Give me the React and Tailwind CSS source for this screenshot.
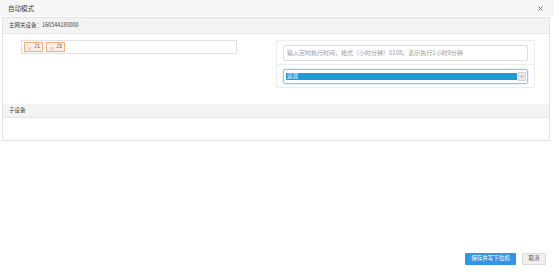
import React from 'react';

const font = { fontFamily: '"Noto Sans CJK SC", "Liberation Sans", sans-serif' };

const Tag = ({ label }) => (
  <span className="flex items-center h-[10px] px-[2px] gap-[2px] border border-[#f4ae84] bg-[#fdece1] text-[5.5px] text-[#666] leading-none">
    <span className="text-[5px] text-[#999]">×</span>
    <span>{label}</span>
  </span>
);

export default function App() {
  return (
    <div className="w-[554px] h-[272px] bg-white flex flex-col text-[#333]" style={font}>
      {/* title bar */}
      <div className="h-[16px] bg-[#f6f6f6] flex items-center justify-between pl-[8px] pr-[10px]">
        <span className="text-[6.5px] text-[#444] leading-none">自动模式</span>
        <svg width="5" height="5" viewBox="0 0 5 5" className="mr-[1px]">
          <path d="M0.5 0.5 L4.5 4.5 M4.5 0.5 L0.5 4.5" stroke="#666" strokeWidth="0.9" />
        </svg>
      </div>

      {/* panel */}
      <div className="mt-[1px] ml-[2px] w-[548px] border border-[#e3e3e3] flex flex-col">
        <div className="h-[16px] bg-[#f3f3f3] border-b border-[#e6e6e6] flex items-center pl-[6px]">
          <span className="text-[5.5px] text-[#444] leading-none">主网关设备：160544180000</span>
        </div>

        <div className="flex pt-[6px] pb-[16px]">
          <div className="w-[273px] pl-[18px]">
            <div className="w-[216px] h-[14px] border border-[#e2e2e2] flex items-center gap-[3px] pl-[2px]">
              <Tag label="J1" />
              <Tag label="J2" />
            </div>
          </div>
          <div className="w-[259px] h-[48px] border border-[#ececec] rounded-[2px] flex flex-col">
            <div className="px-[6px] pt-[4px] pb-[3px] border-b border-[#ededed]">
              <div className="h-[16px] border border-[#dedede] rounded-[2px] flex items-center pl-[3px]">
                <span className="text-[6px] text-[#999] leading-none whitespace-nowrap">
                  输入定时执行时间，格式（小时分钟）0108。表示执行1小时8分钟
                </span>
              </div>
            </div>
            <div className="px-[6px] pt-[4px]">
              <div className="h-[15px] border border-[#8cc7f2] rounded-[2px] shadow-[0_0_2px_#9fd0f5] flex items-center pl-[2px] pr-[1px]">
                <div className="flex-1 h-[7px] bg-[#1f9ad8] flex items-center pl-[1px]">
                  <span className="text-[5.5px] text-[#e8f4fb] leading-none">遥观</span>
                </div>
                <div className="w-[8px] h-[9px] ml-[1px] bg-[#e9e9e9] border border-[#d6d6d6] flex items-center justify-center">
                  <svg width="4" height="3" viewBox="0 0 4 3">
                    <path d="M0.5 0.8 L2 2.2 L3.5 0.8" stroke="#777" strokeWidth="0.7" fill="none" />
                  </svg>
                </div>
              </div>
            </div>
          </div>
        </div>

        <div className="h-[14px] bg-[#f3f3f3] border-b border-[#e6e6e6] flex items-center pl-[6px]">
          <span className="text-[5.5px] text-[#444] leading-none">子设备</span>
        </div>
        <div className="h-[22px]" />
      </div>

      <div className="flex-1" />

      {/* footer */}
      <div className="flex justify-end items-center gap-[6px] pr-[8px] pb-[7px]">
        <button className="h-[12px] w-[51px] bg-[#3495e6] text-white text-[5.5px] leading-none rounded-[1px]">
          保存并写下位机
        </button>
        <button className="h-[12px] w-[24px] bg-[#efefef] border border-[#dcdcdc] text-[#555] text-[5.5px] leading-none rounded-[1px]">
          取消
        </button>
      </div>
    </div>
  );
}
